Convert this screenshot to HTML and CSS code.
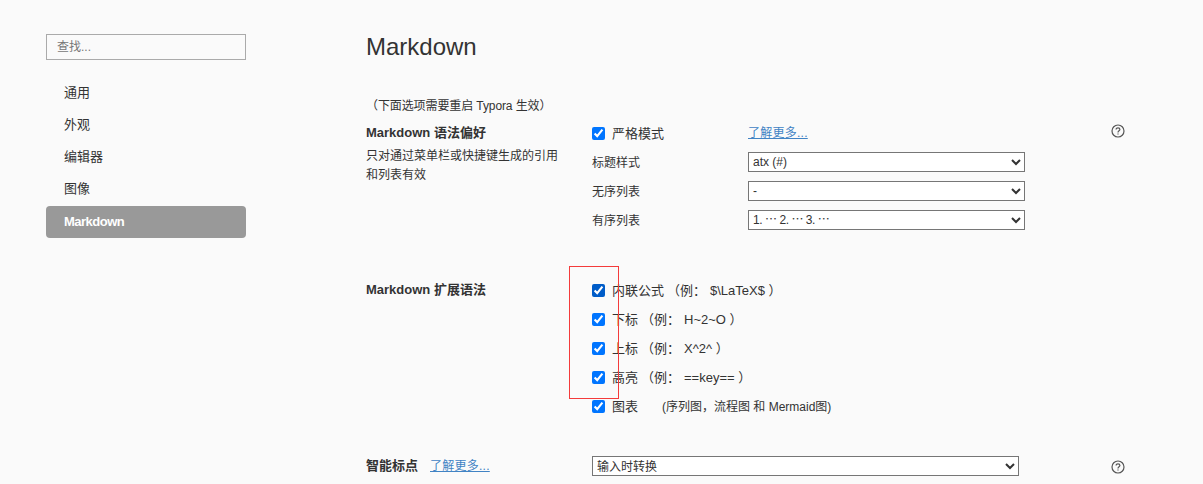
FILE: index.html
```html
<!DOCTYPE html>
<html lang="zh-CN">
<head>
    <meta charset="utf-8">
    <title>Markdown</title>
    <link rel="stylesheet" href="styles.css">
</head>
<body>
    <nav class="sidebar">
        <input type="text" class="search" placeholder="查找...">
        <ul class="menu">
            <li>通用</li>
            <li>外观</li>
            <li>编辑器</li>
            <li>图像</li>
            <li class="active">Markdown</li>
        </ul>
    </nav>
    <main class="panel">
        <h1>Markdown</h1>
        <p class="restart-note">（下面选项需要重启 Typora 生效）</p>

        <section class="group">
            <div class="group-label">
                <h2>Markdown 语法偏好</h2>
                <p class="desc">只对通过菜单栏或快捷键生成的引用和列表有效</p>
            </div>
            <div class="options">
                <div class="row">
                    <label class="strict"><input type="checkbox" checked><span>严格模式</span></label>
                    <a href="#">了解更多...</a>
                </div>
                <div class="row">
                    <span class="name">标题样式</span>
                    <select><option>atx (#)</option></select>
                </div>
                <div class="row">
                    <span class="name">无序列表</span>
                    <select><option>-</option></select>
                </div>
                <div class="row">
                    <span class="name">有序列表</span>
                    <select class="ordered"><option>1. ⋯ 2. ⋯ 3. ⋯</option></select>
                </div>
            </div>
            <svg class="help" viewBox="0 0 14 14">
                <circle cx="7" cy="7" r="6"/>
                <path d="M5.1 5.6C5.1 4.4 5.9 3.8 7 3.8S8.9 4.5 8.9 5.5C8.9 6.7 7 6.8 7 8.4M7 9.4V10.6"/>
            </svg>
        </section>

        <section class="group extensions">
            <div class="group-label">
                <h2>Markdown 扩展语法</h2>
            </div>
            <div class="options">
                <div class="row"><label><input type="checkbox" class="hovered" checked><span>内联公式</span></label><span class="sample">（例：</span><span class="code">$\LaTeX$ ）</span></div>
                <div class="row"><label><input type="checkbox" checked><span>下标</span></label><span class="sample">（例：</span><span class="code">H~2~O ）</span></div>
                <div class="row"><label><input type="checkbox" checked><span>上标</span></label><span class="sample">（例：</span><span class="code">X^2^ ）</span></div>
                <div class="row"><label><input type="checkbox" checked><span>高亮</span></label><span class="sample">（例：</span><span class="code">==key== ）</span></div>
                <div class="row"><label><input type="checkbox" checked><span>图表</span></label><span class="diagram-note">(序列图，流程图 和 Mermaid图)</span></div>
                <div class="marker"></div>
            </div>
        </section>

        <section class="group punctuation">
            <div class="group-label inline">
                <h2>智能标点</h2>
                <a href="#">了解更多...</a>
            </div>
            <div class="options">
                <div class="row">
                    <select class="wide"><option>输入时转换</option></select>
                </div>
            </div>
            <svg class="help" viewBox="0 0 14 14">
                <circle cx="7" cy="7" r="6"/>
                <path d="M5.1 5.6C5.1 4.4 5.9 3.8 7 3.8S8.9 4.5 8.9 5.5C8.9 6.7 7 6.8 7 8.4M7 9.4V10.6"/>
            </svg>
        </section>
    </main>
</body>
</html>
```

FILE: styles.css
```css
* {
    box-sizing: border-box;
}
body {
    margin: 0;
    height: 484px;
    overflow: hidden;
    display: flex;
    background-color: #fafafa;
    color: #333;
    font-family: "Liberation Sans", Arial, "Noto Sans CJK SC", sans-serif;
    font-size: 13px;
}
h1, h2, p, ul {
    margin: 0;
    padding: 0;
}
a {
    color: #4183c4;
    font-size: 12px;
    letter-spacing: 0.25px;
}
.sidebar {
    width: 200px;
    margin: 34px 120px 0 46px;
    flex: none;
}
.search {
    display: block;
    width: 200px;
    height: 26px;
    padding: 0 10px;
    border: 1px solid #aaa;
    background: transparent;
    font-family: inherit;
    font-size: 12px;
}
.search::placeholder {
    color: #777;
}
.menu {
    margin-top: 18px;
    list-style: none;
}
.menu li {
    height: 32px;
    padding-left: 18px;
    line-height: 30px;
}
.menu .active {
    background-color: #999;
    color: #fff;
    font-weight: bold;
    line-height: 31px;
    letter-spacing: -0.5px;
    border-radius: 4px;
}
.panel {
    width: 760px;
    padding-top: 32px;
}
h1 {
    height: 64px;
    font-size: 24px;
    font-weight: normal;
    line-height: 30px;
}
.restart-note {
    height: 23px;
    font-size: 12px;
    line-height: 20px;
    letter-spacing: -0.1px;
}
.group {
    display: flex;
    height: 157px;
}
.group-label {
    width: 226px;
    flex: none;
}
.group-label h2 {
    font-size: 13px;
    line-height: 28px;
}
.inline {
    display: flex;
    align-items: center;
    gap: 12px;
    height: 28px;
}
.desc {
    width: 194px;
    font-size: 12px;
    line-height: 19px;
}
.options {
    position: relative;
    width: 519px;
}
.row {
    display: flex;
    align-items: center;
    height: 28px;
    margin-bottom: 1px;
    white-space: nowrap;
}
.row span, .row a, .inline a {
    padding-bottom: 2px;
}
.row a, .inline a {
    margin-bottom: 1px;
}
label {
    display: flex;
    align-items: center;
}
input[type="checkbox"] {
    width: 13px;
    height: 13px;
    margin: 0 7px 0 0;
}
.hovered {
    accent-color: #005cc8;
}
.strict, .name {
    width: 156px;
}
.name {
    font-size: 12px;
}
select {
    width: 277px;
    height: 20px;
    padding: 0;
    border: 1px solid #767676;
    border-radius: 0;
    background-color: #fff;
    color: #333;
    font-family: inherit;
    font-size: 12px;
}
.ordered {
    letter-spacing: -0.45px;
}
.wide {
    width: 427px;
    padding-top: 1px;
}
.sample {
    width: 43px;
    margin-left: 3px;
}
.diagram-note {
    margin-left: 24px;
    font-size: 12px;
}
.help {
    width: 14px;
    height: 14px;
    margin-top: 5px;
    fill: none;
    stroke: #555;
    stroke-width: 1.2;
}
.extensions {
    height: 176px;
}
.punctuation {
    height: 28px;
}
.punctuation .help {
    margin-top: 8px;
}
/* red frame around the first four checkboxes */
.marker {
    position: absolute;
    left: -23px;
    top: -10px;
    width: 50px;
    height: 133px;
    border: 1px solid #f43b3b;
}
```
